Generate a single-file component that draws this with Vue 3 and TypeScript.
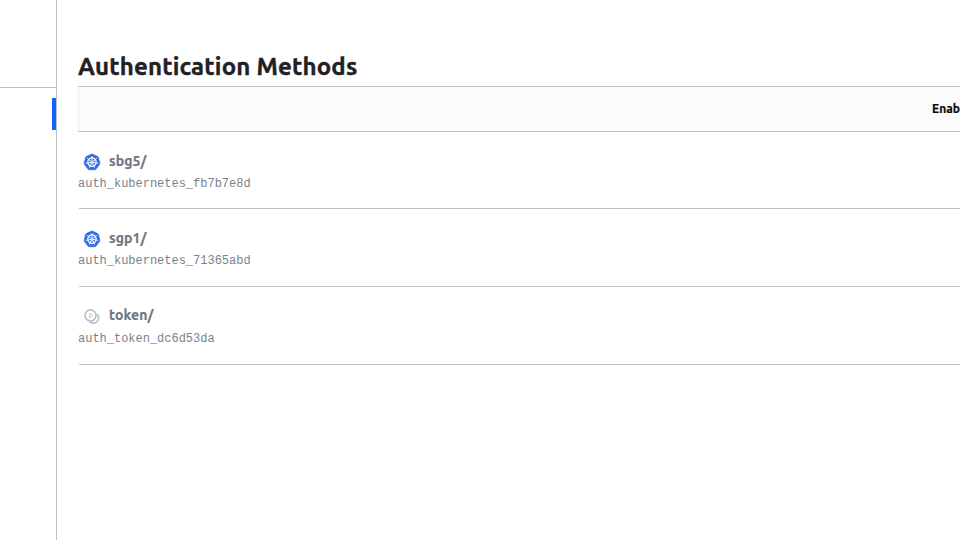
<script setup lang="ts">
interface AuthMethod {
  path: string
  accessor: string
  kind: 'kubernetes' | 'token'
}

const methods: AuthMethod[] = [
  { path: 'sbg5/', accessor: 'auth_kubernetes_fb7b7e8d', kind: 'kubernetes' },
  { path: 'sgp1/', accessor: 'auth_kubernetes_71365abd', kind: 'kubernetes' },
  { path: 'token/', accessor: 'auth_token_dc6d53da', kind: 'token' },
]

const spokes: number[] = [0, 1, 2, 3, 4, 5, 6].map((i) => (i * 360) / 7)
</script>

<template>
  <div class="page">
    <aside class="sidebar">
      <div class="sidebar-head"></div>
      <div class="active-marker"></div>
    </aside>
    <main class="content">
      <h1 class="title">Authentication Methods</h1>
      <div class="toolbar">
        <span class="enable">Enab</span>
      </div>
      <section class="list">
        <article v-for="method in methods" :key="method.accessor" class="row">
          <div class="heading">
            <svg v-if="method.kind === 'kubernetes'" class="icon" viewBox="0 0 18 18">
              <g transform="translate(0 .4)">
                <path
                  d="M8.4.8 Q9 .5 9.6.8 L14.7 3.2 Q15.3 3.5 15.4 4.1 L16.8 9.8 Q16.9 10.5 16.5 11 L13 15.7 Q12.6 16.3 11.9 16.3 H6.1 Q5.4 16.3 5 15.7 L1.5 11 Q1.1 10.5 1.2 9.8 L2.6 4.1 Q2.7 3.5 3.3 3.2Z"
                  fill="#326ce5"
                  stroke="#326ce5"
                  stroke-width=".8"
                />
                <g fill="none" stroke="#fff">
                  <circle cx="9" cy="8.7" r="4.2" stroke-width="1.2" />
                  <path
                    v-for="angle in spokes"
                    :key="angle"
                    d="M9 7.7V2.7"
                    stroke-width=".9"
                    :transform="`rotate(${angle} 9 8.7)`"
                  />
                </g>
                <circle cx="9" cy="8.7" r="1" fill="#fff" />
              </g>
            </svg>
            <svg v-else class="icon" viewBox="0 0 18 18" fill="none" stroke="#bac1cc">
              <circle cx="7.5" cy="8.4" r="5.5" stroke-width="1.7" />
              <path d="M6.4 6.8h1.1a1.6 1.6 0 0 1 0 3.2h-1.1z" stroke-width=".9" />
              <path d="M14.2 7.3A5.2 5.2 0 1 1 6.6 14.4" stroke-width="1.7" />
            </svg>
            <span class="path">{{ method.path }}</span>
          </div>
          <code class="accessor">{{ method.accessor }}</code>
        </article>
      </section>
    </main>
  </div>
</template>

<style>
body {
  margin: 0;
  background: #fff;
}
</style>

<style scoped>
.page {
  display: flex;
  width: 100%;
  height: 540px;
  overflow: hidden;
  font-family: Ubuntu, 'Noto Sans', sans-serif;
}
.sidebar {
  box-sizing: border-box;
  flex: 0 0 57px;
  display: flex;
  flex-direction: column;
  border-right: 1px solid #bac1cc;
}
.sidebar-head {
  height: 87px;
  border-bottom: 1px solid #bac1cc;
}
.active-marker {
  align-self: flex-end;
  width: 4px;
  height: 32px;
  margin-top: 10px;
  background: #1563ff;
}
.content {
  flex: 1;
  min-width: 0;
  padding: 51px 0 0 21px;
}
.title {
  height: 35px;
  margin: 0;
  color: #1f2124;
  font-size: 24px;
  font-weight: 700;
  line-height: 31px;
  letter-spacing: 0.18px;
  -webkit-text-stroke: 0.4px #1f2124;
  white-space: nowrap;
}
.toolbar {
  box-sizing: border-box;
  display: flex;
  align-items: center;
  height: 46px;
  padding-left: 853px;
  border: 1px solid #bac1cc;
  border-left-color: #ebeef2;
  border-right: 0;
  background: #fbfbfb;
  overflow: hidden;
}
.enable {
  flex: none;
  color: #0a0a0a;
  font-size: 12px;
  font-weight: 700;
  line-height: 18px;
  -webkit-text-stroke: 0.2px #0a0a0a;
  white-space: nowrap;
}
.list {
  padding-left: 1px;
}
.row {
  box-sizing: border-box;
  height: 78px;
  padding-top: 18px;
  border-bottom: 1px solid #bac1cc;
}
.row:first-child {
  height: 77px;
}
.row:last-child {
  padding-top: 17px;
}
.heading {
  display: flex;
  align-items: center;
  height: 22px;
  padding-left: 4px;
}
.icon {
  flex: none;
  width: 18px;
  height: 18px;
  margin-top: 2px;
}
.path {
  margin-left: 8px;
  color: #6f7682;
  font-size: 14px;
  font-weight: 700;
  line-height: 22px;
  letter-spacing: 0.12px;
  -webkit-text-stroke: 0.2px #6f7682;
}
.accessor {
  display: block;
  margin: 1px 0 0 -1px;
  color: #7b818c;
  font-family: 'Liberation Mono', monospace;
  font-size: 12px;
  line-height: 22px;
  letter-spacing: -0.01px;
}
.row:last-child .accessor {
  margin-top: 2px;
}
</style>
